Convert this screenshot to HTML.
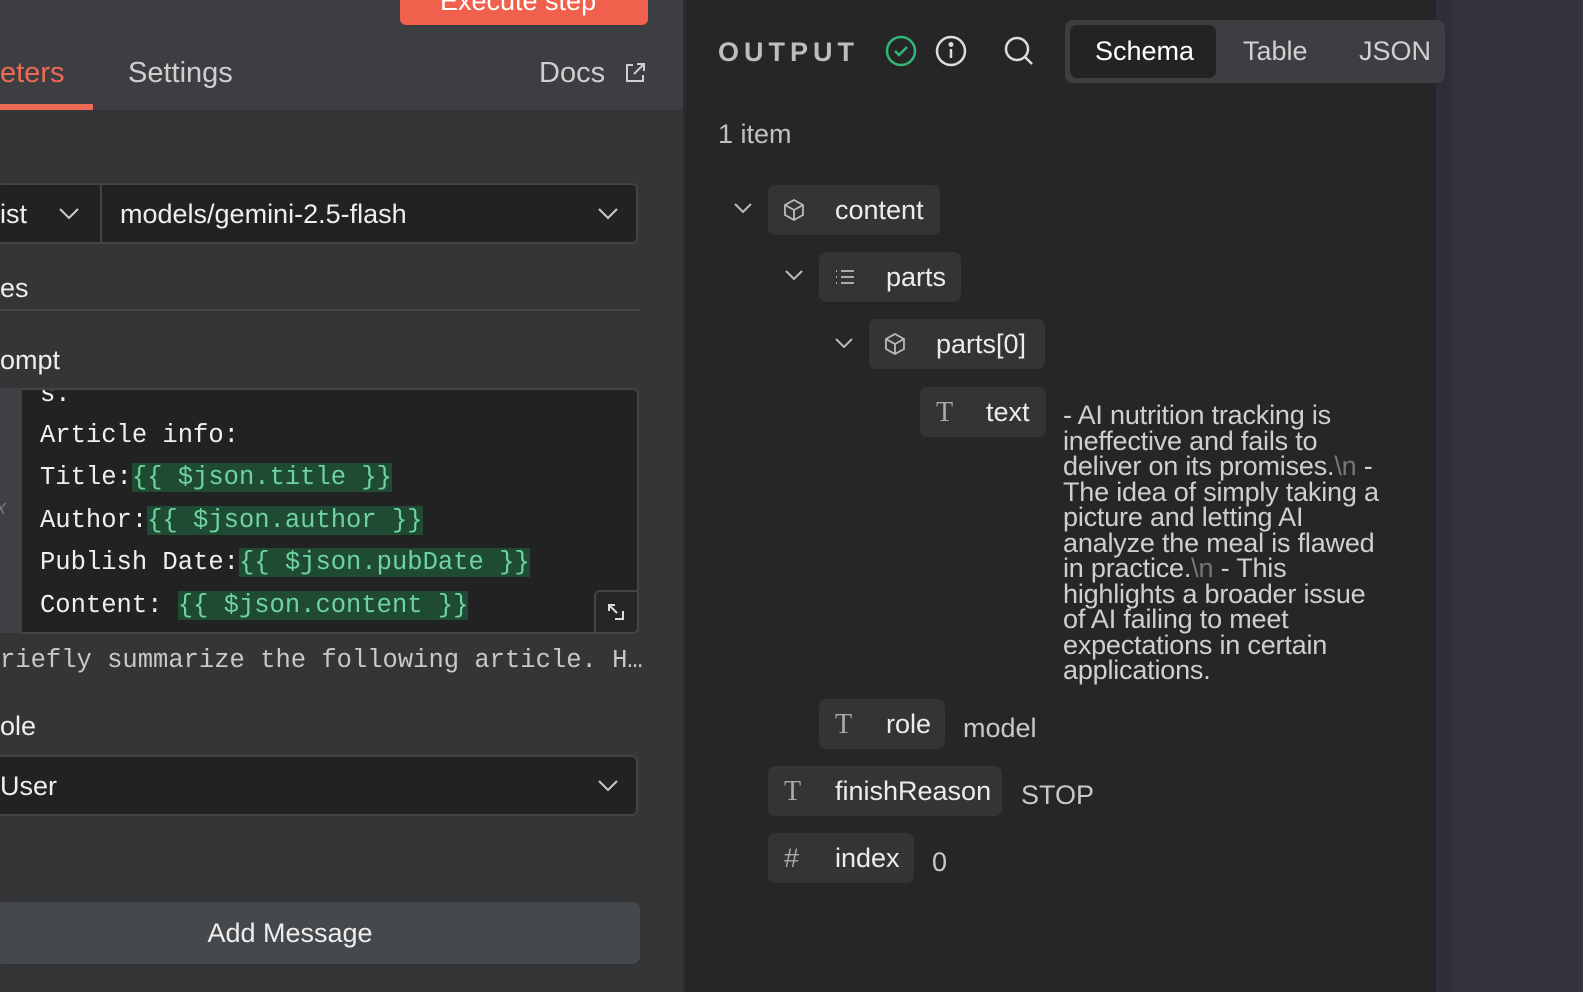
<!DOCTYPE html>
<html><head><meta charset="utf-8"><style>
*{margin:0;padding:0;box-sizing:border-box}
body{width:1583px;height:992px;overflow:hidden;background:#262626;font-family:"Liberation Sans",sans-serif;position:relative;color:#e6e6e6}
.a{position:absolute;white-space:nowrap}
.t{font-size:27px;line-height:1}
.mono{font-family:"Liberation Mono",monospace;font-size:25.5px;line-height:1;color:#f0f0f0}
.hl{background:#1f4a33;color:#6fd3a0}
.pill{position:absolute;height:50px;background:#333436;border-radius:7px}
.pill .ic{position:absolute;left:14px;top:13px;width:24px;height:24px}
.pill span{position:absolute;top:12px;font-size:27px;line-height:1;color:#ececec}
.chev{position:absolute}
</style></head><body>
<div class="a" style="left:0;top:0;width:683px;height:992px;background:#333537"></div>
<div class="a" style="left:0;top:0;width:683px;height:110px;background:#3c3e41"></div>
<div class="a" style="left:683px;top:0;width:3px;height:992px;background:#2b2b2b"></div>
<div class="a" style="left:400px;top:-10px;width:248px;height:35px;background:#f0614d;border-radius:6px"></div>
<div class="a t" style="left:440px;top:-12px;color:#fff">Execute step</div>
<div class="a" style="left:0;top:59px;color:#ee6a55;font-size:29px;line-height:1">eters</div>
<div class="a" style="left:0;top:104px;width:93px;height:6px;background:#ee6a55"></div>
<div class="a" style="left:128px;top:59px;color:#cfcfcf;font-size:29px;line-height:1">Settings</div>
<div class="a" style="left:539px;top:59px;color:#cfcfcf;font-size:29px;line-height:1">Docs</div>
<svg class="a" style="left:624px;top:62px" width="22" height="22" viewBox="0 0 22 22" fill="none" stroke="#cfcfcf" stroke-width="2"><path d="M9 3H3v16h16v-6M13 2h7v7M20 2L10 12"/></svg>

<div class="a" style="left:-5px;top:183px;width:643px;height:61px;background:#222;border:2px solid #444;border-radius:6px"></div>
<div class="a" style="left:100px;top:185px;width:2px;height:57px;background:#444"></div>
<div class="a t" style="left:0;top:201px;color:#eee">ist</div>
<svg class="a" style="left:58px;top:207px" width="22" height="14"><path d="M2 2l9 9 9-9" fill="none" stroke="#ccc" stroke-width="2"/></svg>
<div class="a t" style="left:120px;top:201px;color:#eee">models/gemini-2.5-flash</div>
<svg class="a" style="left:597px;top:207px" width="22" height="14"><path d="M2 2l9 9 9-9" fill="none" stroke="#ccc" stroke-width="2"/></svg>
<div class="a t" style="left:0;top:275px;color:#eee">es</div>
<div class="a" style="left:0;top:309px;width:640px;height:2px;background:#454545"></div>
<div class="a t" style="left:0;top:347px;color:#eee">ompt</div>

<div class="a" style="left:0;top:388px;width:22px;height:245px;background:#3e4043"></div>
<div class="a" style="left:-4px;top:497px;color:#777;font-style:italic;font-size:20px">x</div>
<div class="a" style="left:22px;top:388px;width:617px;height:246px;background:#222;border:2px solid #444;border-left:none;border-radius:0 6px 6px 0;overflow:hidden">
 <div class="a mono" style="left:18px;top:-8px">s.</div>
 <div class="a mono" style="left:18px;top:33px">Article info:</div>
 <div class="a mono" style="left:18px;top:75px">Title:<span class="hl">{{ $json.title }}</span></div>
 <div class="a mono" style="left:18px;top:118px">Author:<span class="hl">{{ $json.author }}</span></div>
 <div class="a mono" style="left:18px;top:160px">Publish Date:<span class="hl">{{ $json.pubDate }}</span></div>
 <div class="a mono" style="left:18px;top:203px">Content: <span class="hl">{{ $json.content }}</span></div>
</div>
<div class="a" style="left:594px;top:590px;width:45px;height:44px;background:#262626;border:2px solid #444;border-radius:6px 0 6px 0"></div>
<svg class="a" style="left:606px;top:602px" width="20" height="20" viewBox="0 0 20 20" fill="none" stroke="#ddd" stroke-width="2"><path d="M3 9V3h6M3 3l8 8M17 9v8H9"/></svg>
<div class="a mono" style="left:0;top:648px;color:#c8c8c8">riefly summarize the following article. H…</div>
<div class="a t" style="left:0;top:713px;color:#eee">ole</div>
<div class="a" style="left:-5px;top:755px;width:643px;height:61px;background:#222;border:2px solid #444;border-radius:6px"></div>
<div class="a t" style="left:0;top:773px;color:#eee">User</div>
<svg class="a" style="left:597px;top:779px" width="22" height="14"><path d="M2 2l9 9 9-9" fill="none" stroke="#ccc" stroke-width="2"/></svg>
<div class="a" style="left:-5px;top:902px;width:645px;height:62px;background:#46494c;border-radius:8px"></div>
<div class="a t" style="left:0;top:920px;width:580px;text-align:center;color:#eee">Add Message</div>

<div class="a" style="left:1436px;top:0;width:147px;height:992px;background:#33323d"></div>
<div class="a" style="left:1436px;top:0;width:16px;height:992px;background:#2f2e38"></div>

<div class="a" style="left:718px;top:37px;font-size:27px;font-weight:bold;letter-spacing:5px;color:#bdbdbd">OUTPUT</div>
<svg class="a" style="left:884px;top:34px" width="34" height="34" viewBox="0 0 34 34" fill="none" stroke="#2fb879" stroke-width="2.5"><circle cx="17" cy="17" r="14"/><path d="M11 17l4 4 8-8"/></svg>
<svg class="a" style="left:934px;top:34px" width="34" height="34" viewBox="0 0 34 34" fill="none" stroke="#ddd" stroke-width="2.5"><circle cx="17" cy="17" r="14"/><path d="M17 15v9"/><circle cx="17" cy="10.5" r="1.2" fill="#ddd"/></svg>
<svg class="a" style="left:1002px;top:34px" width="34" height="34" viewBox="0 0 34 34" fill="none" stroke="#ddd" stroke-width="2.5"><circle cx="15" cy="15" r="11"/><path d="M23 23l7 7"/></svg>
<div class="a" style="left:1065px;top:20px;width:380px;height:63px;background:#3c3e41;border-radius:8px"></div>
<div class="a" style="left:1070px;top:25px;width:146px;height:53px;background:#232323;border-radius:7px"></div>
<div class="a t" style="left:1095px;top:38px;color:#fff">Schema</div>
<div class="a t" style="left:1243px;top:38px;color:#d0d0d0">Table</div>
<div class="a t" style="left:1359px;top:38px;color:#d0d0d0">JSON</div>
<div class="a t" style="left:718px;top:121px;color:#c0c0c0">1 item</div>

<svg class="chev" style="left:733px;top:202px" width="20" height="13"><path d="M2 2l8 8 8-8" fill="none" stroke="#bbb" stroke-width="2"/></svg>
<div class="pill" style="left:768px;top:185px;width:172px"><svg class="ic" viewBox="0 0 24 24" fill="none" stroke="#bbb" stroke-width="1.8"><path d="M12 2l9 5v10l-9 5-9-5V7zM3 7l9 5 9-5M12 12v10"/></svg><span style="left:67px">content</span></div>
<svg class="chev" style="left:784px;top:269px" width="20" height="13"><path d="M2 2l8 8 8-8" fill="none" stroke="#bbb" stroke-width="2"/></svg>
<div class="pill" style="left:819px;top:252px;width:142px"><svg class="ic" viewBox="0 0 24 24" fill="none" stroke="#bbb" stroke-width="1.8"><path d="M8 6h13M8 12h13M8 18h13M3 6h1M3 12h1M3 18h1"/></svg><span style="left:67px">parts</span></div>
<svg class="chev" style="left:834px;top:337px" width="20" height="13"><path d="M2 2l8 8 8-8" fill="none" stroke="#bbb" stroke-width="2"/></svg>
<div class="pill" style="left:869px;top:319px;width:176px"><svg class="ic" viewBox="0 0 24 24" fill="none" stroke="#bbb" stroke-width="1.8"><path d="M12 2l9 5v10l-9 5-9-5V7zM3 7l9 5 9-5M12 12v10"/></svg><span style="left:67px">parts[0]</span></div>
<div class="pill" style="left:920px;top:387px;width:126px"><span style="left:16px;color:#aaa;font-family:'Liberation Serif',serif;font-size:28px">T</span><span style="left:66px">text</span></div>
<div class="a" style="left:1063px;top:403px;font-size:27px;line-height:25.5px;color:#cfcfcf;letter-spacing:-0.2px">
- AI nutrition tracking is<br>ineffective and fails to<br>deliver on its promises.<span style="color:#777">\n</span> -<br>The idea of simply taking a<br>picture and letting AI<br>analyze the meal is flawed<br>in practice.<span style="color:#777">\n</span> - This<br>highlights a broader issue<br>of AI failing to meet<br>expectations in certain<br>applications.</div>
<div class="pill" style="left:819px;top:699px;width:126px"><span style="left:16px;color:#aaa;font-family:'Liberation Serif',serif;font-size:28px">T</span><span style="left:67px">role</span></div>
<div class="a t" style="left:963px;top:715px;color:#c8c8c8">model</div>
<div class="pill" style="left:768px;top:766px;width:234px"><span style="left:16px;color:#aaa;font-family:'Liberation Serif',serif;font-size:28px">T</span><span style="left:67px">finishReason</span></div>
<div class="a t" style="left:1021px;top:782px;color:#c8c8c8">STOP</div>
<div class="pill" style="left:768px;top:833px;width:146px"><span style="left:16px;color:#aaa">#</span><span style="left:67px">index</span></div>
<div class="a t" style="left:932px;top:849px;color:#c8c8c8">0</div>
</body></html>
